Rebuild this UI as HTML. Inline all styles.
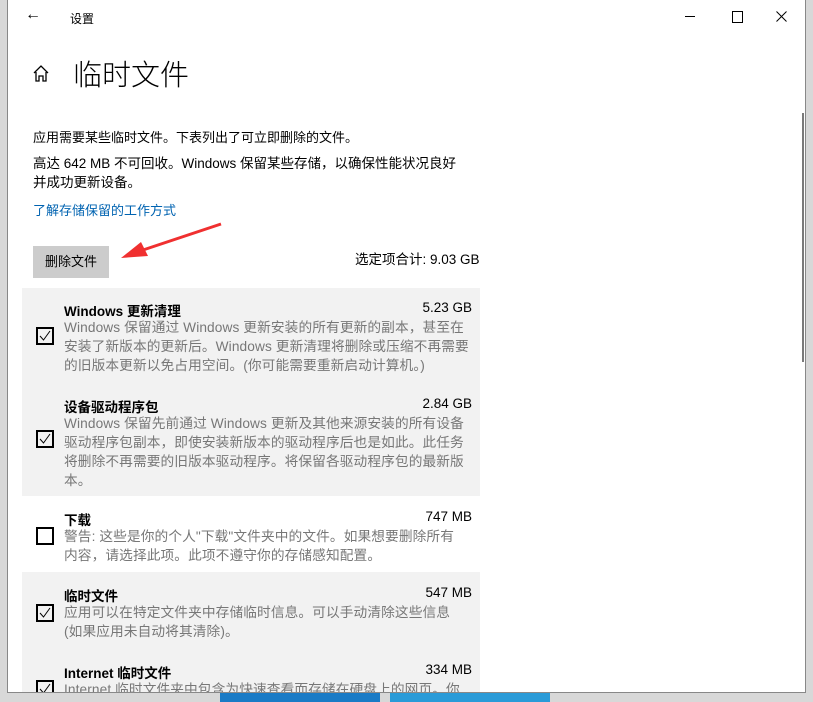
<!DOCTYPE html><html><head><meta charset="utf-8"><style>
body{margin:0;width:813px;height:702px;overflow:hidden;background:#d8d8d8;font-family:"Liberation Sans","Noto Sans CJK SC",sans-serif;position:relative}
.win{position:absolute;left:7px;top:0;width:797px;height:692px;background:#fff;border:1px solid #888;border-top:none;overflow:hidden}
.a{position:absolute;white-space:nowrap}
.row{position:absolute;left:14px;width:458px}
.g{background:#f2f2f2}
.cb{position:absolute;left:14px;width:18px;height:18px;border:2px solid #000;box-sizing:border-box}
.cb svg{position:absolute;left:1px;top:1px}
.t{position:absolute;left:42px;font-size:13.5px;font-weight:bold;color:#000}
.s{position:absolute;right:8px;font-size:13.5px;color:#000}
.d{position:absolute;left:42px;font-size:13.7px;color:#777;line-height:19px;width:409px;letter-spacing:0.1px}
</style></head><body>
<div style="position:absolute;left:220px;top:693px;width:160px;height:9px;background:#1a7bc6"></div>
<div style="position:absolute;left:390px;top:693px;width:160px;height:9px;background:#2a9bd8"></div>
<div class="win">
<div class="a" style="left:17px;top:6px;font-size:16px">←</div>
<div class="a" style="left:62px;top:10px;font-size:12px">设置</div>
<div class="a" style="left:677px;top:16px;width:10px;height:1px;background:#000"></div>
<div class="a" style="left:724px;top:11px;width:9px;height:10px;border:1px solid #000"></div>
<svg class="a" style="left:768px;top:11px" width="11" height="11"><path d="M0.5 0.5L10.5 10.5M10.5 0.5L0.5 10.5" stroke="#000" stroke-width="1"/></svg>
<svg class="a" style="left:25px;top:65px" width="16" height="18" viewBox="0 0 16 18"><path d="M1 8L8 1L15 8M3 7V16H6V11H10V16H13V7" fill="none" stroke="#000" stroke-width="1.3"/></svg>
<div class="a" style="left:65px;top:52px;font-size:29px;font-weight:300">临时文件</div>
<div class="a" style="left:25px;top:127px;font-size:13px">应用需要某些临时文件。下表列出了可立即删除的文件。</div>
<div class="a" style="left:25px;top:154px;font-size:13.5px;line-height:19px">高达 642 MB 不可回收。Windows 保留某些存储，以确保性能状况良好<br>并成功更新设备。</div>
<div class="a" style="left:25px;top:200px;font-size:13px;color:#0063b1">了解存储保留的工作方式</div>
<div class="a" style="left:25px;top:246px;width:76px;height:32px;background:#ccc;font-size:13px;line-height:32px;text-align:center">删除文件</div>
<svg class="a" style="left:105px;top:222px" width="110" height="40"><path d="M108 2L24 30" stroke="#f03030" stroke-width="3"/><path d="M8 36L28 20L35 34Z" fill="#f03030"/></svg>
<div class="a" style="left:347px;top:248px;font-size:13.5px">选定项合计: 9.03 GB</div>
<div class="row g" style="top:288px;height:99px"><div class="t" style="top:12px">Windows 更新清理</div><div class="s" style="top:12px">5.23 GB</div><div class="cb" style="top:39px"><svg width="12" height="12"><path d="M1 6L4.5 10L11 1" fill="none" stroke="#000" stroke-width="1"/></svg></div><div class="d" style="top:30px">Windows 保留通过 Windows 更新安装的所有更新的副本，甚至在安装了新版本的更新后。Windows 更新清理将删除或压缩不再需要的旧版本更新以免占用空间。(你可能需要重新启动计算机。)</div></div>
<div class="row g" style="top:387px;height:109px"><div class="t" style="top:9px">设备驱动程序包</div><div class="s" style="top:9px">2.84 GB</div><div class="cb" style="top:43px"><svg width="12" height="12"><path d="M1 6L4.5 10L11 1" fill="none" stroke="#000" stroke-width="1"/></svg></div><div class="d" style="top:27px">Windows 保留先前通过 Windows 更新及其他来源安装的所有设备驱动程序包副本，即使安装新版本的驱动程序后也是如此。此任务将删除不再需要的旧版本驱动程序。将保留各驱动程序包的最新版本。</div></div>
<div class="row" style="top:496px;height:76px"><div class="t" style="top:13px">下载</div><div class="s" style="top:13px">747 MB</div><div class="cb" style="top:31px"></div><div class="d" style="top:31px">警告: 这些是你的个人"下载"文件夹中的文件。如果想要删除所有<br>内容，请选择此项。此项不遵守你的存储感知配置。</div></div>
<div class="row g" style="top:572px;height:130px"><div class="t" style="top:13px">临时文件</div><div class="s" style="top:13px">547 MB</div><div class="cb" style="top:32px"><svg width="12" height="12"><path d="M1 6L4.5 10L11 1" fill="none" stroke="#000" stroke-width="1"/></svg></div><div class="d" style="top:31px">应用可以在特定文件夹中存储临时信息。可以手动清除这些信息<br>(如果应用未自动将其清除)。</div>
<div class="t" style="top:90px">Internet 临时文件</div><div class="s" style="top:90px">334 MB</div><div class="cb" style="top:108px"><svg width="12" height="12"><path d="M1 6L4.5 10L11 1" fill="none" stroke="#000" stroke-width="1"/></svg></div><div class="d" style="top:108px">Internet 临时文件夹中包含为快速查看而存储在硬盘上的网页。你</div></div>
<div class="a" style="left:794px;top:113px;width:2px;height:249px;background:#7a7a7a"></div>
</div>
</body></html>
